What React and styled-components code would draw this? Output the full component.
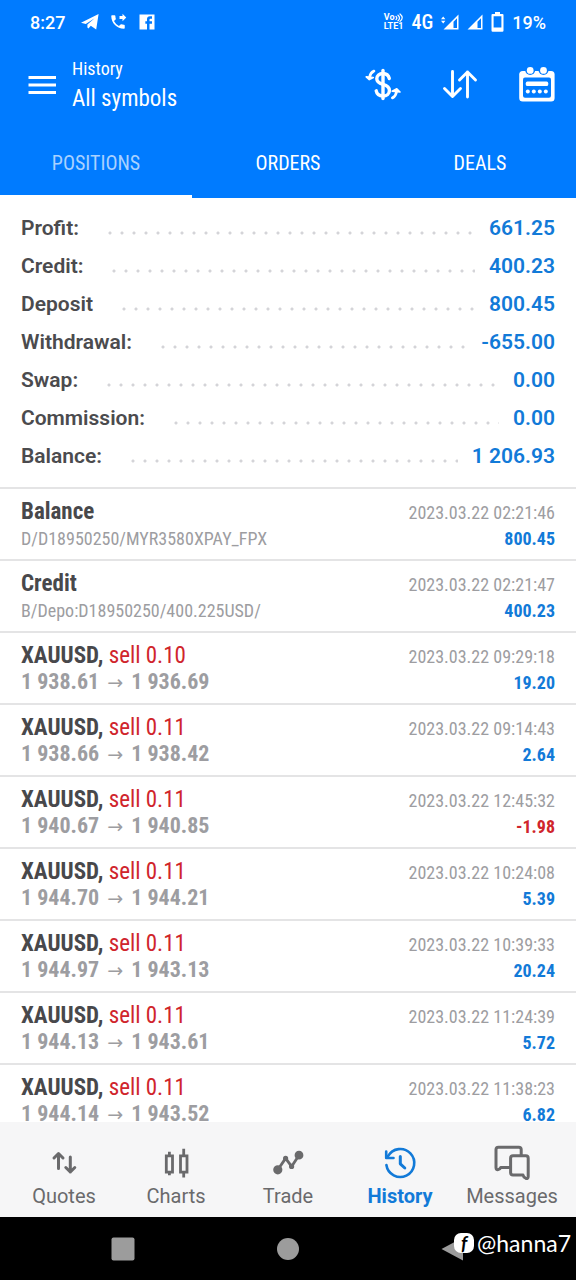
import { useState } from 'react';
import styled, { createGlobalStyle, css } from 'styled-components';
import { MdPhoneForwarded } from 'react-icons/md';

const blue = '#007bff';
const valueBlue = '#127ad8';
const red = '#d0252c';
const condensed = "'Roboto Condensed', 'Liberation Sans Narrow', Roboto, sans-serif";

const GlobalStyle = createGlobalStyle`
  * {
    box-sizing: border-box;
  }

  body {
    margin: 0;
    background: #fff;
    font-family: Roboto, 'Liberation Sans', sans-serif;
  }

  button {
    padding: 0;
    border: none;
    background: none;
    color: inherit;
    font: inherit;
    cursor: pointer;
  }

  svg {
    display: block;
    flex: none;
  }
`;

const Screen = styled.div`
  display: flex;
  flex-direction: column;
  height: 100vh;
  overflow: hidden;
`;

const Header = styled.header`
  flex: none;
  background: ${blue};
  color: #fff;
`;

const StatusBar = styled.div`
  display: flex;
  align-items: center;
  justify-content: space-between;
  height: 44px;
  padding: 0 30px;
  font-size: 18px;
  font-weight: 500;
`;

const StatusGroup = styled.div`
  display: flex;
  align-items: center;
  gap: ${({ $gap }) => $gap}px;
`;

const Clock = styled.span`
  margin-right: 6px;
`;

const Volte = styled.div`
  font-size: 9px;
  font-weight: 700;
  line-height: 9px;
`;

const VolteTop = styled.div`
  display: flex;
  align-items: center;
`;

const Network = styled.span`
  font-family: ${condensed};
  font-size: 20px;
`;

const Toolbar = styled.div`
  display: flex;
  align-items: center;
  height: 82px;
  padding: 0 21px 0 28px;
`;

const Title = styled.div`
  flex: 1;
  margin-left: 16px;
  font-family: ${condensed};
`;

const Caption = styled.div`
  font-size: 18px;
  line-height: 28px;
`;

const Heading = styled.h1`
  margin: 0;
  font-size: 23px;
  font-weight: 400;
  line-height: 32px;
`;

const Actions = styled.div`
  display: flex;
  gap: 41px;
`;

const Tabs = styled.div`
  display: grid;
  grid-template-columns: repeat(3, 1fr);
`;

const Tab = styled.button`
  && {
    height: 72px;
    padding-top: 5px;
    border-bottom: 3px solid ${({ $active }) => ($active ? '#fff' : 'transparent')};
    color: ${({ $active }) => ($active ? '#a9d1ff' : '#fff')};
    font-family: ${condensed};
    font-size: 20px;
  }
`;

const Summary = styled.dl`
  flex: none;
  margin: 0;
  padding: 11px 21px 12px;
`;

const SummaryRow = styled.div`
  display: flex;
  align-items: center;
  line-height: 38px;
`;

const Label = styled.dt`
  color: #4b4b4e;
  font-size: 21px;
  font-weight: 600;
`;

const Dots = styled.span`
  flex: 1;
  height: 4px;
  margin: 9px 14px 0 25px;
  background: radial-gradient(circle at center, #d4d4d8 1px, transparent 2px) 0 0 / 12px 4px repeat-x;
`;

const Value = styled.dd`
  margin: 0;
  color: ${valueBlue};
  font-size: 21px;
  font-weight: 600;
`;

const List = styled.ul`
  flex: 1;
  min-height: 0;
  margin: 0;
  padding: 0;
  overflow: hidden;
  list-style: none;
  font-family: ${condensed};
`;

const Deal = styled.li`
  height: 72px;
  padding: 10px 21px 0;
  border-top: 2px solid #e4e4e5;
`;

const Line = styled.div`
  display: flex;
  align-items: baseline;
  justify-content: space-between;
  line-height: 26px;
`;

const Name = styled.span`
  color: #48484b;
  font-size: 23px;
  font-weight: 700;
`;

const Side = styled.span`
  color: ${red};
  font-weight: 400;
`;

const Muted = styled.span`
  color: #9d9da1;
  font-size: 18px;
`;

const Price = styled.span`
  color: #9d9da1;
  font-size: 22px;
  font-weight: 700;
  line-height: 22px;
`;

const Arrow = styled.span`
  margin: 0 3px;
  font-family: 'Noto Sans', 'DejaVu Sans', sans-serif;
  font-size: 19px;
  font-weight: 400;
  line-height: 1;
`;

const Amount = styled.span`
  color: ${({ $loss }) => ($loss ? red : valueBlue)};
  font-size: 18px;
  font-weight: 700;
`;

const BottomNav = styled.nav`
  flex: none;
  display: grid;
  grid-template-columns: repeat(5, 1fr);
  height: 95px;
  padding: 0 8px;
  background: #f6f6f7;
`;

const NavButton = styled.button`
  && {
    display: flex;
    flex-direction: column;
    align-items: center;
    padding-top: 23px;
    gap: 3px;
    color: #6a6a6c;
    font-size: 20px;
    line-height: 24px;
    ${({ $active }) =>
      $active &&
      css`
        color: ${valueBlue};
        font-weight: 700;
      `}
  }
`;

const SystemNav = styled.div`
  flex: none;
  position: relative;
  display: grid;
  grid-template-columns: repeat(3, 1fr);
  height: 63px;
  padding: 0 40px;
  background: #000;
`;

const SystemButton = styled.button`
  display: flex;
  align-items: center;
  justify-content: center;
`;

const Watermark = styled.div`
  position: absolute;
  top: 11px;
  right: 5px;
  display: flex;
  align-items: center;
  gap: 3px;
  color: #fff;
  font-family: Lato, sans-serif;
  font-size: 23px;
  line-height: 30px;
`;

const WatermarkBadge = styled.span`
  width: 20px;
  height: 20px;
  border-radius: 7px;
  background: #fff;
  color: #000;
  font-size: 19px;
  font-style: italic;
  font-weight: 700;
  line-height: 19px;
  text-align: center;
`;

const stroke = {
  fill: 'none',
  stroke: 'currentColor',
  strokeLinecap: 'round',
  strokeLinejoin: 'round',
};

const TelegramIcon = () => (
  <svg width='18' height='16' viewBox='0 0 18 16' fill='currentColor'>
    <path d='M0 8.8L17.6 0L15.2 15.6L9.8 11.8L7.4 14.4L6.4 13.6V10.4L13.6 4.2L4.8 10z' />
  </svg>
);

const FacebookIcon = () => (
  <svg width='20' height='20' viewBox='0 0 24 24' fill='currentColor'>
    <path d='M3 3H21V21H3zM18 5H15.5A3.5 3.5 0 0 0 12 8.5V11H10V14H12V21H15V14H18V11H15V9A1 1 0 0 1 16 8H18V5Z' fillRule='evenodd' />
  </svg>
);

const WavesIcon = () => (
  <svg width='9' height='9' viewBox='0 0 9 9' {...stroke} strokeWidth='1.2'>
    <path d='M1 3.5q1.6 1.6 0 3.2M3 2.2q3 2.8 0 5.6M5 1q4.4 3.8 0 7.4' />
  </svg>
);

const SignalIcon = ({ data }) => (
  <svg width={data ? 18 : 16} height='16' viewBox={data ? '-2 0 18 16' : '0 0 16 16'} fill='currentColor'>
    <path d='M15.5 .5V15.5H.5zM14 4.2L10.5 7.8V14H14z' fillRule='evenodd' />
    {data && <path d='M-2 5.2L.2 2.5L2.4 5.2zM-2 6.8H2.4L.2 9.5z' />}
  </svg>
);

const BatteryIcon = () => (
  <svg width='13' height='20' viewBox='0 0 13 20' fill='currentColor'>
    <path
      d='M4 0H9V2H11.5Q12.5 2 12.5 3V18.5Q12.5 19.7 11.3 19.7H1.7Q.5 19.7 .5 18.5V3Q.5 2 1.5 2H4zM2.6 4.2V15.5H10.4V4.2z'
      fillRule='evenodd'
    />
  </svg>
);

const MenuIcon = () => (
  <svg width='28' height='18' viewBox='0 0 28 18' fill='currentColor'>
    <path d='M.5 0H28V3H.5zM.5 7.5H28V10.5H.5zM.5 15H28V18H.5z' />
  </svg>
);

const CurrencyIcon = () => (
  <svg width='36' height='36' viewBox='0 -2 36 36' {...stroke} strokeWidth='3.4'>
    <path d='M24.3 9.5C23.5 6.3 21 4.5 18 4.5C14.2 4.5 11.8 6.7 11.8 9.8C11.8 13.4 14.8 14.5 18 15.4C21.6 16.4 24.4 17.6 24.4 21.4C24.4 24.8 21.8 27 18 27C14.4 27 11.8 25 11.2 21.8' />
    <path d='M18 1.5V29.5' />
    <path d='M9 2Q5.5 3.5 4.6 8M27.3 29Q31 27 31.6 22.5' strokeWidth='2.6' />
    <path d='M1.2 7.8L4.3 10.6L8.3 8.6zM27.2 22.2L31.8 19.8L35 23z' fill='currentColor' strokeWidth='1.6' />
  </svg>
);

const SortIcon = () => (
  <svg width='36' height='36' viewBox='0 -2 36 36' {...stroke} strokeWidth='2.9'>
    <path d='M10.5 2.5V27.5M2.5 19.5L10.5 27.5L18.5 19.5M25.5 28V3M17.5 11L25.5 3L33.5 11' />
  </svg>
);

const CalendarIcon = () => (
  <svg width='36' height='36' viewBox='0 1 36 36' fill='currentColor'>
    <rect x='.2' y='5' width='35.4' height='30.4' rx='3.5' />
    <rect x='4' y='11.4' width='28' height='20.4' rx='2' fill={blue} />
    <circle cx='11.2' cy='4' r='5' fill={blue} />
    <circle cx='24.5' cy='4' r='5' fill={blue} />
    <circle cx='11.2' cy='4.4' r='3.4' />
    <circle cx='24.5' cy='4.4' r='3.4' />
    <rect x='6.8' y='15.6' width='22.4' height='4.4' rx='1.6' />
    <circle cx='8.8' cy='25.6' r='2' />
    <circle cx='14.8' cy='25.6' r='2' />
    <circle cx='20.8' cy='25.6' r='2' />
    <circle cx='26.8' cy='25.6' r='2' />
  </svg>
);

const QuotesIcon = () => (
  <svg width='36' height='36' viewBox='0 0 36 36' {...stroke} strokeWidth='3'>
    <path d='M12.5 23.5V8.8M8 13L12.5 8.5L17 13M24.3 12V27M19.8 22.5L24.3 27L28.8 22.5' />
  </svg>
);

const ChartsIcon = () => (
  <svg width='36' height='36' viewBox='0 0 36 36' fill='none' stroke='currentColor' strokeWidth='2.8'>
    <path d='M8.3 10.8H14.5V27.2H8.3zM11.4 6.8V10.8M11.4 27.2V30.2M22.5 10.8H29V27.2H22.5zM25.7 3.8V10.8M25.7 27.2V32.4' />
  </svg>
);

const TradeIcon = () => (
  <svg width='36' height='36' viewBox='0 0 36 36' {...stroke} strokeWidth='2.8'>
    <path d='M7.8 24.8L15.6 13.4L21.6 21.4L29 10.2' />
    <circle cx='7.8' cy='24.8' r='3.2' fill='currentColor' />
    <circle cx='15.6' cy='13.4' r='1.2' fill='currentColor' />
    <circle cx='21.6' cy='21.4' r='1.2' fill='currentColor' />
    <circle cx='29' cy='10.2' r='3' fill='currentColor' />
  </svg>
);

const HistoryIcon = () => (
  <svg width='36' height='36' viewBox='0 0 36 36' {...stroke} strokeWidth='2.6'>
    <path d='M4.4 20A14 14 0 1 0 6 11.2' />
    <path d='M4.2 6.5V13H11.5' />
    <path d='M18.3 11.5V18.8L22.8 23' strokeWidth='3' />
  </svg>
);

const MessagesIcon = () => (
  <svg width='36' height='36' viewBox='0 0 36 36' {...stroke} strokeWidth='3'>
    <path d='M27.2 10V4.6Q27.2 2.2 24.8 2.2H4.4Q2 2.2 2 4.6V22.6Q2 25 4.2 24.6Q6 24.3 6.8 22.4H16.5' />
    <path d='M19 10.8H31.8Q34.2 10.8 34.2 13.2V31.4Q34.2 34 31.6 33.2Q29.5 32.4 29 30H19Q16.6 30 16.6 27.6V13.2Q16.6 10.8 19 10.8Z' />
  </svg>
);

const summary = [
  ['Profit:', '661.25'],
  ['Credit:', '400.23'],
  ['Deposit', '800.45'],
  ['Withdrawal:', '-655.00'],
  ['Swap:', '0.00'],
  ['Commission:', '0.00'],
  ['Balance:', '1 206.93'],
];

const deals = [
  { name: 'Balance', note: 'D/D18950250/MYR3580XPAY_FPX', time: '02:21:46', amount: '800.45' },
  { name: 'Credit', note: 'B/Depo:D18950250/400.225USD/', time: '02:21:47', amount: '400.23' },
  { name: 'XAUUSD', side: 'sell 0.10', open: '1 938.61', close: '1 936.69', time: '09:29:18', amount: '19.20' },
  { name: 'XAUUSD', side: 'sell 0.11', open: '1 938.66', close: '1 938.42', time: '09:14:43', amount: '2.64' },
  { name: 'XAUUSD', side: 'sell 0.11', open: '1 940.67', close: '1 940.85', time: '12:45:32', amount: '-1.98' },
  { name: 'XAUUSD', side: 'sell 0.11', open: '1 944.70', close: '1 944.21', time: '10:24:08', amount: '5.39' },
  { name: 'XAUUSD', side: 'sell 0.11', open: '1 944.97', close: '1 943.13', time: '10:39:33', amount: '20.24' },
  { name: 'XAUUSD', side: 'sell 0.11', open: '1 944.13', close: '1 943.61', time: '11:24:39', amount: '5.72' },
  { name: 'XAUUSD', side: 'sell 0.11', open: '1 944.14', close: '1 943.52', time: '11:38:23', amount: '6.82' },
];

const navItems = [
  ['Quotes', QuotesIcon],
  ['Charts', ChartsIcon],
  ['Trade', TradeIcon],
  ['History', HistoryIcon],
  ['Messages', MessagesIcon],
];

const DealRow = ({ deal }) => (
  <Deal>
    <Line>
      {deal.side ? (
        <Name>
          {deal.name}, <Side>{deal.side}</Side>
        </Name>
      ) : (
        <Name>{deal.name}</Name>
      )}
      <Muted as='time'>2023.03.22 {deal.time}</Muted>
    </Line>
    <Line>
      {deal.open ? (
        <Price>
          {deal.open} <Arrow>→</Arrow> {deal.close}
        </Price>
      ) : (
        <Muted>{deal.note}</Muted>
      )}
      <Amount $loss={deal.amount.startsWith('-')}>{deal.amount}</Amount>
    </Line>
  </Deal>
);

const App = () => {
  const [tab, setTab] = useState('POSITIONS');
  const [page, setPage] = useState('History');

  return (
    <Screen>
      <GlobalStyle />
      <Header>
        <StatusBar>
          <StatusGroup $gap={10}>
            <Clock>8:27</Clock>
            <TelegramIcon />
            <MdPhoneForwarded size={18} />
            <FacebookIcon />
          </StatusGroup>
          <StatusGroup $gap={8}>
            <Volte>
              <VolteTop>
                Vo
                <WavesIcon />
              </VolteTop>
              LTE1
            </Volte>
            <Network>4G</Network>
            <SignalIcon data />
            <SignalIcon />
            <BatteryIcon />
            <span>19%</span>
          </StatusGroup>
        </StatusBar>
        <Toolbar>
          <button aria-label='Menu'>
            <MenuIcon />
          </button>
          <Title>
            <Caption>History</Caption>
            <Heading>All symbols</Heading>
          </Title>
          <Actions>
            <button aria-label='Symbol'>
              <CurrencyIcon />
            </button>
            <button aria-label='Sort'>
              <SortIcon />
            </button>
            <button aria-label='Period'>
              <CalendarIcon />
            </button>
          </Actions>
        </Toolbar>
        <Tabs role='tablist'>
          {['POSITIONS', 'ORDERS', 'DEALS'].map((name) => (
            <Tab
              key={name}
              role='tab'
              aria-selected={tab === name}
              $active={tab === name}
              onClick={() => setTab(name)}
            >
              {name}
            </Tab>
          ))}
        </Tabs>
      </Header>
      <Summary>
        {summary.map(([label, value]) => (
          <SummaryRow key={label}>
            <Label>{label}</Label>
            <Dots />
            <Value>{value}</Value>
          </SummaryRow>
        ))}
      </Summary>
      <List>
        {deals.map((deal) => (
          <DealRow key={deal.time} deal={deal} />
        ))}
      </List>
      <BottomNav>
        {navItems.map(([name, Icon]) => (
          <NavButton key={name} $active={page === name} onClick={() => setPage(name)}>
            <Icon />
            {name}
          </NavButton>
        ))}
      </BottomNav>
      <SystemNav>
        <SystemButton aria-label='Recent apps'>
          <svg width='24' height='24' fill='#9c9c9c'>
            <rect x='.5' y='.5' width='23' height='23' rx='2' />
          </svg>
        </SystemButton>
        <SystemButton aria-label='Home'>
          <svg width='24' height='24' fill='#9c9c9c'>
            <circle cx='12' cy='12' r='11' />
          </svg>
        </SystemButton>
        <SystemButton aria-label='Back'>
          <svg width='24' height='24' fill='#9c9c9c'>
            <path d='M.5 12L22 .5V23.5z' />
          </svg>
        </SystemButton>
        <Watermark>
          <WatermarkBadge>f</WatermarkBadge>
          @hanna7
        </Watermark>
      </SystemNav>
    </Screen>
  );
};

export default App;
